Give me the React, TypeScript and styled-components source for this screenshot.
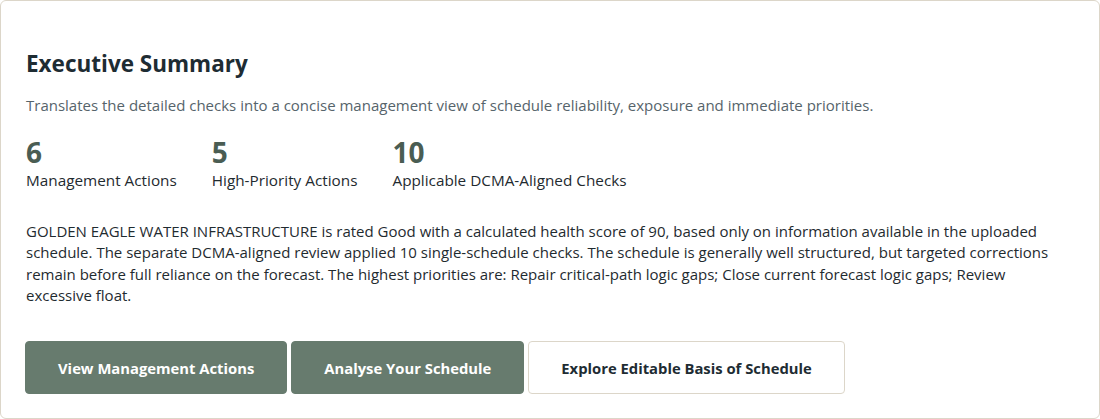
import * as React from 'react';
import styled, { createGlobalStyle } from 'styled-components';

const GlobalStyle = createGlobalStyle`
  html, body {
    margin: 0;
    padding: 0;
    background: #ffffff;
  }
  body {
    font-family: "Open Sans", "Noto Sans", sans-serif;
    color: #1f2b30;
  }
`;

const colors = {
  border: '#dcd6c9',
  title: '#1e2c33',
  muted: '#56646b',
  stat: '#4a5d53',
  text: '#1f2b30',
  green: '#677b6e',
};

const Card = styled.section`
  box-sizing: border-box;
  width: 1100px;
  height: 419px;
  border: 1px solid ${colors.border};
  border-radius: 6px;
  padding: 48px 24px 0 24px;
  background: #fff;
`;

const Title = styled.h2`
  margin: 0 0 0 1px;
  font-size: 22.5px;
  line-height: 30px;
  font-weight: 700;
  color: ${colors.title};
`;

const Lead = styled.p`
  margin: 16px 0 0 1px;
  font-size: 15px;
  line-height: 20px;
  color: ${colors.muted};
`;

const Stats = styled.div`
  display: flex;
  gap: 35px;
  margin: 20px 0 0 1px;
`;

const Stat = styled.div`
  display: flex;
  flex-direction: column;
`;

const StatValue = styled.div`
  font-size: 28px;
  line-height: 34px;
  font-weight: 700;
  color: ${colors.stat};
`;

const StatLabel = styled.div`
  font-size: 15.3px;
  line-height: 22px;
  color: ${colors.text};
`;

const Body = styled.p`
  margin: 30px 0 0 1px;
  font-size: 15px;
  line-height: 21.33px;
  color: ${colors.text};
`;

const Actions = styled.div`
  display: flex;
  gap: 4px;
  margin-top: 35px;
`;

const Button = styled.button<{ $variant?: 'primary' | 'secondary' }>`
  box-sizing: border-box;
  height: 53px;
  padding: 0 32px;
  border-radius: 4px;
  font-family: inherit;
  font-size: 14.8px;
  font-weight: 700;
  cursor: pointer;
  border: 1px solid ${p => (p.$variant === 'secondary' ? colors.border : colors.green)};
  background: ${p => (p.$variant === 'secondary' ? '#fff' : colors.green)};
  color: ${p => (p.$variant === 'secondary' ? colors.title : '#fff')};
`;

function App() {
  const stats = [
    { value: '6', label: 'Management Actions' },
    { value: '5', label: 'High-Priority Actions' },
    { value: '10', label: 'Applicable DCMA-Aligned Checks' },
  ];

  return (
    <>
      <GlobalStyle />
      <Card>
        <Title>Executive Summary</Title>
        <Lead>
          Translates the detailed checks into a concise management view of schedule reliability, exposure and immediate priorities.
        </Lead>
        <Stats>
          {stats.map(stat => (
            <Stat key={stat.label}>
              <StatValue>{stat.value}</StatValue>
              <StatLabel>{stat.label}</StatLabel>
            </Stat>
          ))}
        </Stats>
        <Body>
          GOLDEN EAGLE WATER INFRASTRUCTURE is rated Good with a calculated health score of 90, based only on information available in the uploaded schedule. The separate DCMA-aligned review applied 10 single-schedule checks. The schedule is generally well structured, but targeted corrections remain before full reliance on the forecast. The highest priorities are: Repair critical-path logic gaps; Close current forecast logic gaps; Review excessive float.
        </Body>
        <Actions>
          <Button>View Management Actions</Button>
          <Button>Analyse Your Schedule</Button>
          <Button $variant="secondary">Explore Editable Basis of Schedule</Button>
        </Actions>
      </Card>
    </>
  );
}

export default App;
